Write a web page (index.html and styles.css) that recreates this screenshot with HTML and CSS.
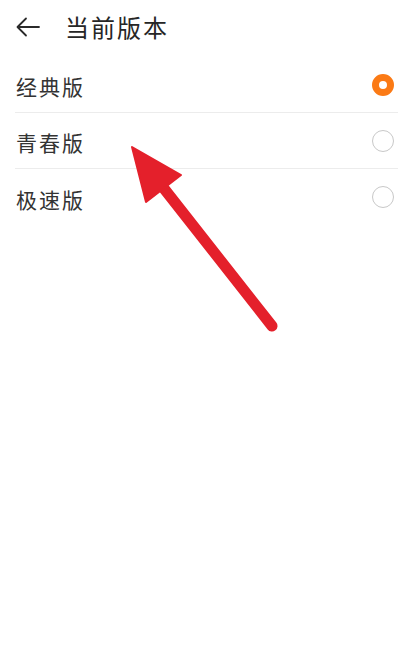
FILE: index.html
```html
<!DOCTYPE html>
<html lang="zh-CN">
<head>
<meta charset="utf-8">
<link rel="stylesheet" href="styles.css">
</head>
<body>
<div class="page">
  <header class="topbar">
    <svg class="back" width="24" height="20" viewBox="0 0 24 20" aria-hidden="true">
      <path d="M23 10 H2 M10 1.5 L1.5 10 L10 18.5" fill="none" stroke="#2a2a2a" stroke-width="1.8" stroke-linecap="round" stroke-linejoin="round"/>
    </svg>
    <h1 class="title">当前版本</h1>
  </header>
  <ul class="list">
    <li class="row"><span class="label">经典版</span><span class="radio radio-on"></span></li>
    <li class="row"><span class="label">青春版</span><span class="radio"></span></li>
    <li class="row"><span class="label">极速版</span><span class="radio"></span></li>
  </ul>
  <svg class="pointer" width="413" height="670" viewBox="0 0 413 670" aria-hidden="true">
    <line x1="162" y1="186" x2="272" y2="326" stroke="#e4202b" stroke-width="11" stroke-linecap="round"/>
    <polygon points="132,147 181,175 146,202" fill="#e4202b" stroke="#e4202b" stroke-width="2" stroke-linejoin="round"/>
  </svg>
</div>
</body>
</html>
```
FILE: styles.css
```css
* { box-sizing: border-box; }
html, body { margin: 0; padding: 0; background: #fff; }
body {
  font-family: "Noto Sans CJK SC", "Noto Sans", sans-serif;
  color: #333;
}
.page {
  position: relative;
  width: 413px;
  height: 670px;
  overflow: hidden;
}
.topbar {
  display: flex;
  align-items: center;
  height: 57px;
  padding-left: 16px;
  padding-bottom: 4px;
}
.back { flex: none; display: block; }
.title {
  margin: 0 0 0 25px;
  font-size: 24px;
  font-weight: normal;
  letter-spacing: 2px;
  color: #262626;
  line-height: 1;
}
.list {
  list-style: none;
  margin: 0 15px;
  padding: 0;
}
.row {
  display: flex;
  align-items: center;
  justify-content: space-between;
  height: 56px;
  padding-left: 1px;
  padding-right: 4px;
  border-bottom: 1px solid #ececec;
}
.row:last-child { border-bottom: none; }
.label {
  font-size: 21px;
  letter-spacing: 2px;
  color: #333;
  line-height: 1;
  padding-top: 4px;
}
.radio {
  width: 22px;
  height: 22px;
  border-radius: 50%;
  border: 1.5px solid #c8c8c8;
  flex: none;
}
.radio-on {
  border: 7px solid #fb7a15;
}
.pointer {
  position: absolute;
  left: 0;
  top: 0;
  pointer-events: none;
}
```
